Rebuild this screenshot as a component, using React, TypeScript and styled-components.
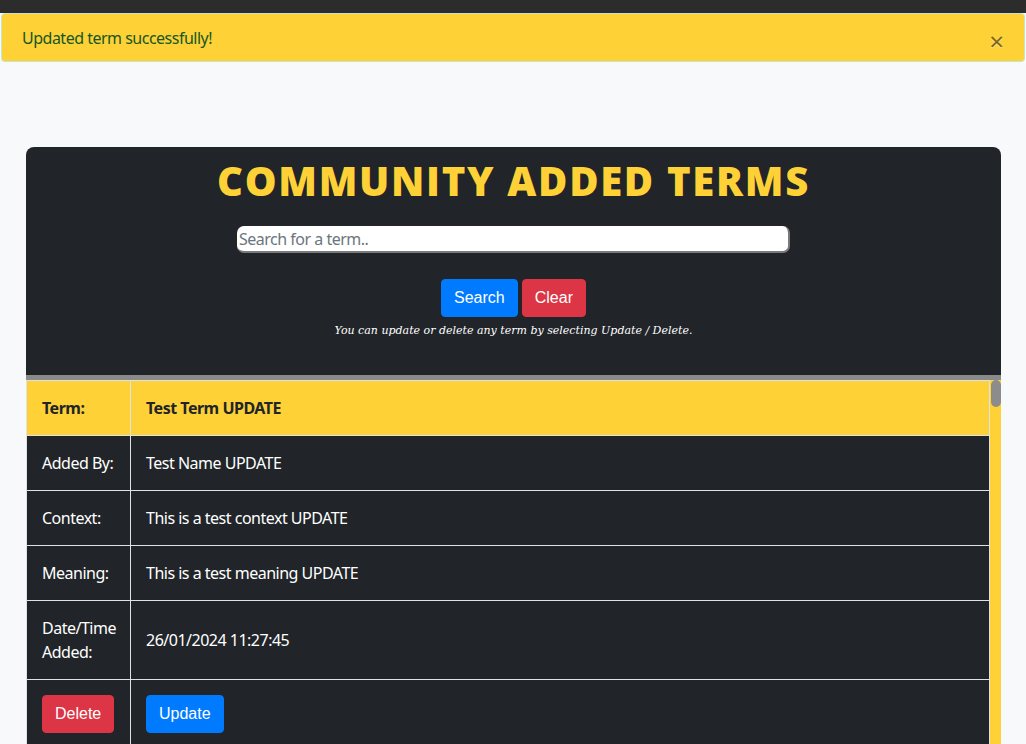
import React from "react";
import styled, { createGlobalStyle } from "styled-components";

const GlobalStyle = createGlobalStyle`
  html, body {
    margin: 0;
    padding: 0;
    background: #f8f9fa;
    font-family: "Noto Sans", "Open Sans", sans-serif;
    color: #212529;
  }
  * { box-sizing: border-box; }
`;

const Page = styled.div`
  display: flex;
  flex-direction: column;
  height: 744px;
  overflow: hidden;
`;

const TopStrip = styled.div`
  flex: none;
  height: 13px;
  background: #2c2c2c;
`;

const Alert = styled.div`
  position: relative;
  flex: none;
  margin: 0 1px;
  padding: 12px 20px 11px;
  background: #fed136;
  border: 1px solid #c3e6cb;
  border-radius: 4px;
  color: #155724;
  font-size: 16px;
  line-height: 24px;
  letter-spacing: -0.5px;
`;

const CloseButton = styled.button`
  position: absolute;
  top: 0;
  right: 0;
  padding: 15px 20px 0;
  background: transparent;
  border: 0;
  color: #000;
  opacity: 0.5;
  font-family: "Noto Sans", sans-serif;
  font-size: 26px;
  font-weight: 400;
  line-height: 24px;
  text-shadow: 0 1px 0 #fff;
  cursor: pointer;
`;

const Card = styled.section`
  flex: none;
  margin: 85px 25px 0 26px;
  background: #212529;
  border-radius: 8px;
  overflow: hidden;
`;

const Header = styled.div`
  display: flex;
  flex-direction: column;
  align-items: center;
  padding: 10px 0 35px;
`;

const Title = styled.h2`
  margin: 0 0 21px;
  font-family: "Open Sans", sans-serif;
  font-weight: 800;
  font-size: 40px;
  line-height: 48px;
  letter-spacing: 1.7px;
  text-transform: uppercase;
  color: #fed136;
`;

const SearchInput = styled.input`
  width: 553px;
  height: 27px;
  padding: 0 2px;
  border-style: solid;
  border-width: 0 2px 2px 0;
  border-color: #7a7a7a;
  border-radius: 7px;
  background: #fff;
  font-family: "Noto Sans", sans-serif;
  font-size: 16px;
  letter-spacing: -0.5px;
  color: #212529;
  outline: none;
  &::placeholder { color: #6c757d; }
`;

const ButtonRow = styled.div`
  display: flex;
  gap: 4px;
  margin-top: 26px;
`;

const Btn = styled.button<{ $variant: "primary" | "danger" }>`
  padding: 6px 12px;
  border: 1px solid ${(p) => (p.$variant === "primary" ? "#007bff" : "#dc3545")};
  background: ${(p) => (p.$variant === "primary" ? "#007bff" : "#dc3545")};
  color: #fff;
  border-radius: 4px;
  font-family: "Liberation Sans", Arial, sans-serif;
  font-size: 16px;
  line-height: 24px;
  letter-spacing: 0;
  font-weight: 400;
  cursor: pointer;
`;

const Note = styled.p`
  margin: 5px 0 0;
  font-family: "DejaVu Serif", serif;
  font-style: italic;
  font-size: 11px;
  line-height: 18px;
  color: #fff;
`;

const TableArea = styled.div`
  display: flex;
  height: 380px;
  overflow: hidden;
  border-top: 5px solid #8a8a8a;
`;

const TableWrap = styled.div`
  flex: 1;
  min-width: 0;
`;

const ScrollTrack = styled.div`
  flex: none;
  width: 11px;
  background: #fed136;
  padding: 0 0 0 1px;
`;

const ScrollThumb = styled.div`
  height: 27px;
  background: #8c8c8c;
  border-radius: 5px;
`;

const Table = styled.table`
  width: 100%;
  border-collapse: collapse;
  table-layout: fixed;
  font-size: 16px;
  line-height: 24px;
  letter-spacing: -0.5px;
`;

const Row = styled.tr<{ $head?: boolean }>`
  background: ${(p) => (p.$head ? "#fed136" : "#212529")};
  color: ${(p) => (p.$head ? "#212529" : "#fff")};
  font-weight: ${(p) => (p.$head ? 700 : 400)};
`;

const Cell = styled.td`
  padding: 15px;
  border: 1px solid #dee2e6;
  vertical-align: middle;
  text-align: left;
`;

const term = {
  term: "Test Term UPDATE",
  addedBy: "Test Name UPDATE",
  context: "This is a test context UPDATE",
  meaning: "This is a test meaning UPDATE",
  date: "26/01/2024 11:27:45",
};

export default function App() {
  return (
    <>
      <GlobalStyle />
      <Page>
        <TopStrip />
        <Alert>
          Updated term successfully!
          <CloseButton aria-label="Close">×</CloseButton>
        </Alert>
        <Card>
          <Header>
            <Title>Community Added Terms</Title>
            <SearchInput placeholder="Search for a term.." />
            <ButtonRow>
              <Btn $variant="primary">Search</Btn>
              <Btn $variant="danger">Clear</Btn>
            </ButtonRow>
            <Note>You can update or delete any term by selecting Update / Delete.</Note>
          </Header>
          <TableArea>
            <TableWrap>
              <Table>
                <colgroup>
                  <col style={{ width: 104 }} />
                  <col />
                </colgroup>
                <tbody>
                  <Row $head>
                    <Cell>Term:</Cell>
                    <Cell>{term.term}</Cell>
                  </Row>
                  <Row>
                    <Cell>Added By:</Cell>
                    <Cell>{term.addedBy}</Cell>
                  </Row>
                  <Row>
                    <Cell>Context:</Cell>
                    <Cell>{term.context}</Cell>
                  </Row>
                  <Row>
                    <Cell>Meaning:</Cell>
                    <Cell>{term.meaning}</Cell>
                  </Row>
                  <Row>
                    <Cell>Date/Time Added:</Cell>
                    <Cell>{term.date}</Cell>
                  </Row>
                  <Row>
                    <Cell>
                      <Btn $variant="danger">Delete</Btn>
                    </Cell>
                    <Cell>
                      <Btn $variant="primary">Update</Btn>
                    </Cell>
                  </Row>
                </tbody>
              </Table>
            </TableWrap>
            <ScrollTrack>
              <ScrollThumb />
            </ScrollTrack>
          </TableArea>
        </Card>
      </Page>
    </>
  );
}
